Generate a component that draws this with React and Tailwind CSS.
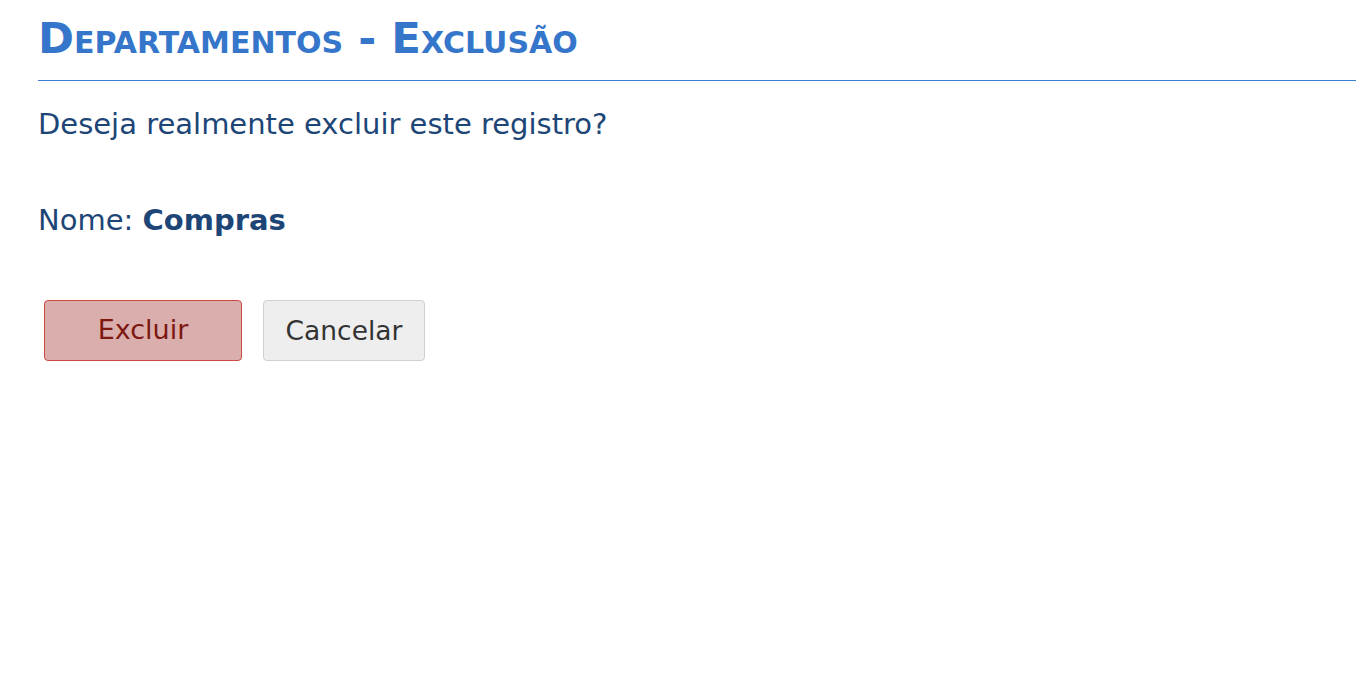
export default function App() {
  const font = { fontFamily: '"DejaVu Sans", Verdana, sans-serif' };
  return (
    <div className="min-h-[682px] bg-white pl-[38px]" style={font}>
      <h1 className="pt-[12px] pb-[16px] text-[43.4px] leading-[52px] font-bold text-[#3576cb] [font-variant:small-caps]">
        Departamentos - Exclusão
      </h1>
      <div className="h-px bg-[#3a7bd4]" />
      <p className="mt-[26px] text-[29px] leading-[35px] text-[#1d4677]">Deseja realmente excluir este registro?</p>
      <p className="mt-[61px] text-[29px] leading-[35px] text-[#1d4677]">
        Nome: <span className="font-bold">Compras</span>
      </p>
      <div className="mt-[62px] flex gap-[21px] pl-[6px]">
        <button className="w-[198px] h-[61px] rounded-[4px] border border-[#cc4a42] bg-[#dbaeae] text-[27px] text-[#7c1810]">
          Excluir
        </button>
        <button className="w-[162px] h-[61px] rounded-[4px] border border-[#d0d0d0] bg-[#eeeeee] text-[26.5px] text-[#333333]">
          Cancelar
        </button>
      </div>
    </div>
  );
}
